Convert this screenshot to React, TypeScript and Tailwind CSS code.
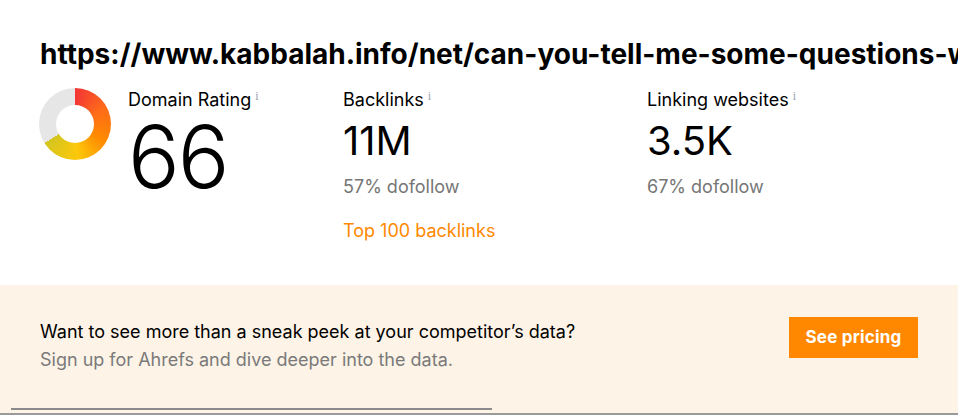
import React from "react";

const Info = () => (
  <sup className="ml-1 text-[12px] font-normal text-gray-400 [font-family:'Liberation_Serif',serif]">
    i
  </sup>
);

// DR ring: conic fill with a white hole in the middle
const Donut = () => (
  <div className="flex h-[72px] w-[72px] shrink-0 items-center justify-center rounded-full bg-[conic-gradient(#f23535_0deg,#ff6a1a_60deg,#ff8a00_120deg,#fcc80a_175deg,#d4c51f_238deg,#e6e6e6_238deg,#e6e6e6_360deg)]">
    <div className="h-[38px] w-[38px] rounded-full bg-white" />
  </div>
);

export default function App() {
  const stats = [
    { label: "Backlinks", value: "11M", sub: "57% dofollow", link: "Top 100 backlinks" },
    { label: "Linking websites", value: "3.5K", sub: "67% dofollow", link: "" },
  ];

  return (
    <div className="relative h-[415px] w-[958px] overflow-hidden bg-white [font-family:Inter,'Liberation_Sans',sans-serif]">
      <div className="px-[40px] pt-[36px]">
        <h1 className="whitespace-nowrap text-[28px] font-bold leading-[36px] text-black">
          https://www.kabbalah.info/net/can-you-tell-me-some-questions-with-answers
        </h1>
        <div className="mt-[17px] flex">
          <div className="flex w-[303px] shrink-0 gap-[17px]">
            <div className="-ml-[1px] -mt-[1px]">
              <Donut />
            </div>
            <div>
              <div className="text-[18px] leading-[22px] text-black">
                Domain Rating
                <Info />
              </div>
              <div className="mt-[6px] text-[86px] font-light leading-[80px] tracking-[-2px] text-black">
                66
              </div>
            </div>
          </div>
          {stats.map((s) => (
            <div key={s.label} className="w-[304px] shrink-0">
              <div className="text-[18px] leading-[22px] text-black">
                {s.label}
                <Info />
              </div>
              <div className="mt-[8px] text-[40px] leading-[44px] text-black">{s.value}</div>
              <div className="mt-[12px] text-[18px] leading-[24px] text-[#767676]">{s.sub}</div>
              {s.link && (
                <div className="mt-[20px] text-[18px] leading-[24px] text-[#ff8800]">{s.link}</div>
              )}
            </div>
          ))}
        </div>
      </div>

      <div className="absolute bottom-0 left-0 right-0 top-[285px] bg-[#fdf3e7]">
        <div className="flex items-start justify-between px-[40px] pt-[32px]">
          <div className="pt-[2px]">
            <div className="text-[18px] leading-[26px] text-black">
              Want to see more than a sneak peek at your competitor’s data?
            </div>
            <div className="mt-[2px] text-[18px] leading-[26px] text-[#7a7a7a]">
              Sign up for Ahrefs and dive deeper into the data.
            </div>
          </div>
          <button className="h-[41px] w-[129px] bg-[#ff8800] text-[17px] font-bold tracking-[0.2px] text-white">
            See pricing
          </button>
        </div>
        <div className="absolute left-[11px] top-[123px] h-[2px] w-[481px] bg-[#8a8a8a]" />
        <div className="absolute bottom-0 left-0 right-0 h-[2px] bg-[#9a9a9a]" />
      </div>
    </div>
  );
}
